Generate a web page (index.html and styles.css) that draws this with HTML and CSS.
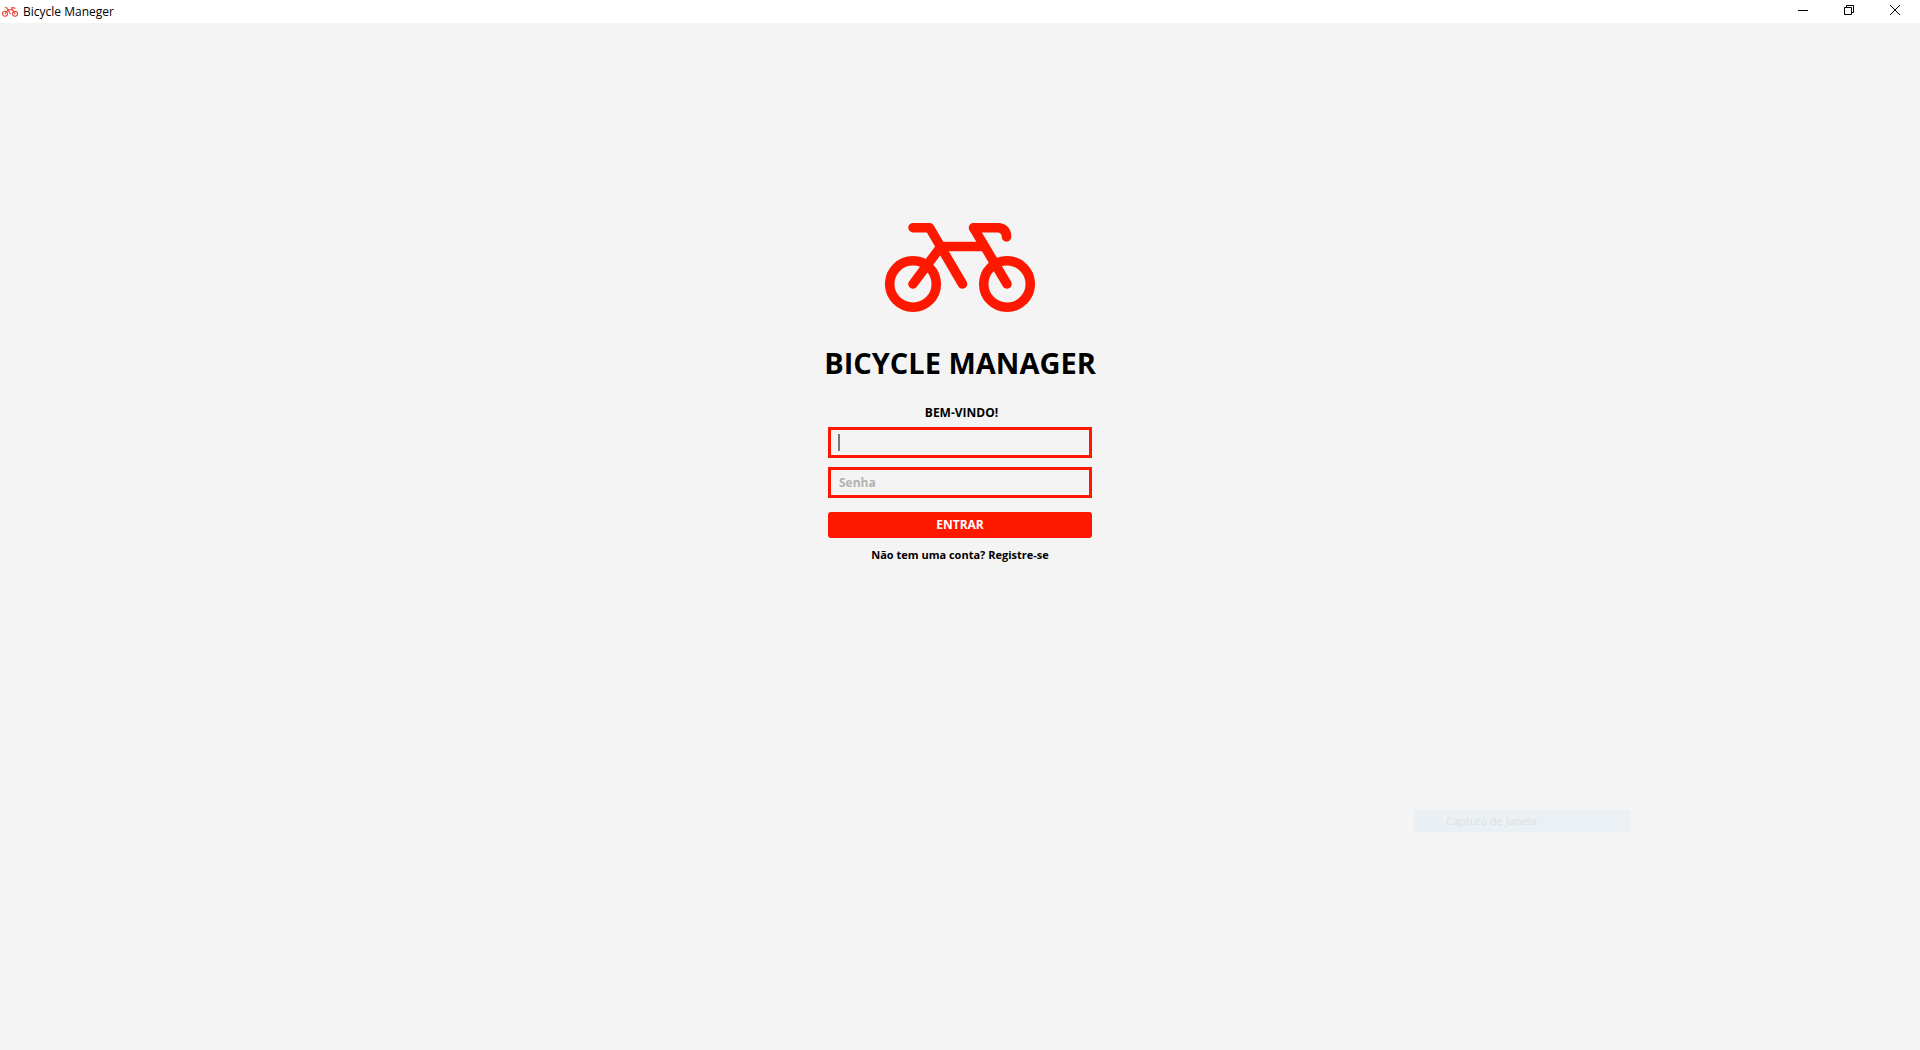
FILE: index.html
```
<!DOCTYPE html>
<html lang="pt-BR">
<head>
<meta charset="utf-8">
<title>Bicycle Maneger</title>
<link rel="stylesheet" href="styles.css">
</head>
<body>
<svg width="0" height="0" class="defs" aria-hidden="true">
  <symbol id="bike" viewBox="0 0 150 90">
    <g fill="none" stroke="currentColor" stroke-width="9.500" stroke-linecap="round" stroke-linejoin="round">
      <circle cx="28" cy="61" r="23.300"/>
      <circle cx="122" cy="61" r="23.300"/>
      <path d="M28 4.700H44.500L77.500 61M28 61L56 23.500H100M122 61L88.500 4.700H114Q121.500 6 121.500 14"/>
    </g>
  </symbol>
</svg>
<header class="titlebar">
  <svg class="titlebar-icon" aria-hidden="true"><use href="#bike"/></svg>
  <span class="titlebar-name">Bicycle Maneger</span>
  <div class="window-buttons">
    <button type="button" aria-label="Minimizar"><svg width="10" height="10" viewBox="0 0 10 10"><path d="M0 5.500H10"/></svg></button>
    <button type="button" aria-label="Restaurar"><svg width="10" height="10" viewBox="0 0 10 10"><path d="M.5 2.500H7.500V9.500H.5ZM2.500 2.500V.5H9.500V7.500H7.500"/></svg></button>
    <button type="button" aria-label="Fechar"><svg width="10" height="10" viewBox="0 0 10 10"><path d="M0 0L10 10M10 0L0 10"/></svg></button>
  </div>
</header>
<main class="login">
  <svg class="logo" role="img" aria-label="Bicicleta"><use href="#bike"/></svg>
  <h1>BICYCLE MANAGER</h1>
  <form class="form">
    <p class="welcome">BEM-VINDO!</p>
    <div class="field">
      <input type="text" aria-label="Login">
      <span class="caret"></span>
    </div>
    <div class="field">
      <input type="password" placeholder="Senha" aria-label="Senha">
    </div>
    <button class="submit" type="submit">ENTRAR</button>
    <a class="register" href="#">Não tem uma conta? Registre-se</a>
  </form>
</main>
<div class="capture-hint">Captura de Janela</div>
</body>
</html>
```
FILE: styles.css
```
* {
  box-sizing: border-box;
}

body {
  margin: 0;
  min-height: 100vh;
  position: relative;
  background: #f4f4f4;
  color: #000;
  font-family: "Segoe UI", "Open Sans", "Noto Sans", sans-serif;
  font-size: 12px;
  line-height: 16px;
}

.defs {
  position: absolute;
}

.titlebar {
  display: flex;
  align-items: center;
  height: 23px;
  padding-left: 2px;
  background: #fff;
}

.titlebar-icon {
  width: 16px;
  height: 10px;
  margin-right: 5px;
  color: #e8382c;
}

.window-buttons {
  display: flex;
  height: 20px;
  align-self: flex-start;
  margin-left: auto;
  gap: 1px;
  padding-right: 3px;
}

.window-buttons button {
  display: flex;
  align-items: center;
  justify-content: center;
  width: 45px;
  padding: 0;
  border: 0;
  background: none;
}

.window-buttons path {
  fill: none;
  stroke: #000;
}

.login {
  display: flex;
  flex-direction: column;
  align-items: center;
  padding-top: 200px;
}

.logo {
  width: 150px;
  height: 90px;
  color: #ff1800;
}

h1 {
  margin: 30px 0 22px;
  font-size: 29px;
  line-height: 40px;
  font-weight: 700;
  white-space: nowrap;
}

.form {
  display: flex;
  flex-direction: column;
  width: 264px;
  font-weight: 700;
}

.welcome {
  margin: 0 0 6px;
  padding-left: 3px;
  text-align: center;
}

.field {
  position: relative;
  height: 31px;
  margin-bottom: 9px;
}

.field input {
  width: 100%;
  height: 100%;
  padding: 0 8px;
  border: 3px solid #ff1800;
  border-radius: 0;
  outline: 0;
  background: transparent;
  color: #000;
  font: inherit;
}

.field input::placeholder {
  color: #b2b2b2;
  opacity: 1;
}

.caret {
  position: absolute;
  top: 7px;
  left: 10px;
  width: 2px;
  height: 17px;
  background: #797979;
}

.submit {
  height: 26px;
  margin-top: 5px;
  padding: 0;
  border: 0;
  border-radius: 3px;
  background: #ff1800;
  color: #fff;
  font: inherit;
}

.register {
  align-self: center;
  margin-top: 9px;
  color: #000;
  font-size: 11px;
  text-decoration: none;
}

/* Fading menu entry floating over the window */
.capture-hint {
  position: absolute;
  left: 1414px;
  top: 810px;
  width: 216px;
  height: 22px;
  padding: 3px 0 0 32px;
  background: linear-gradient(90deg, #eaeff3 28px, #eaf0f3 28px);
  color: #e0e0e2;
  font-size: 11px;
}
```
